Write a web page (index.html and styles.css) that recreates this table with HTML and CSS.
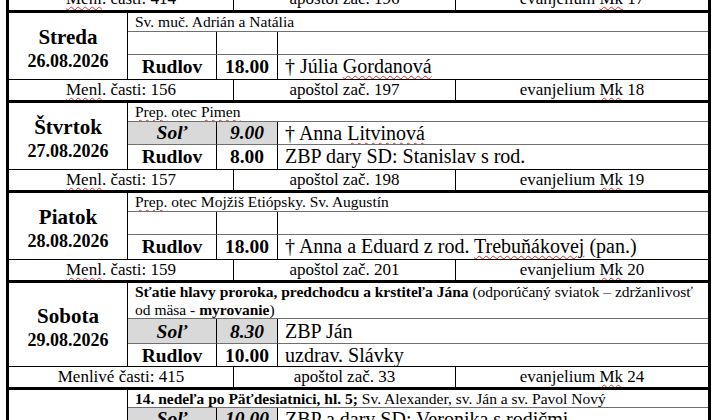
FILE: index.html
```html
<!DOCTYPE html>
<html lang="sk">
<head>
<meta charset="utf-8">
<title>Rozpis bohoslužieb</title>
<link rel="stylesheet" href="styles.css">
</head>
<body>
<div class="sheet">
  <div class="readings first">
    <div class="rd"><span class="sp">Menl</span>. časti: 414</div>
    <div class="rd">apoštol zač. 196</div>
    <div class="rd">evanjelium <span class="sp">Mk</span> 17</div>
  </div>

  <div class="day">
    <div class="dname"><div class="dn">Streda</div><div class="dd">26.08.2026</div></div>
    <div class="feast">Sv. muč. Adrián a Natália</div>
    <div class="loc r1"></div><div class="time r1"></div><div class="int r1"></div>
    <div class="loc">Rudlov</div><div class="time">18.00</div><div class="int">† Júlia <span class="sp">Gordanová</span></div>
  </div>
  <div class="readings">
    <div class="rd"><span class="sp">Menl</span>. časti: 156</div>
    <div class="rd">apoštol zač. 197</div>
    <div class="rd">evanjelium <span class="sp">Mk</span> 18</div>
  </div>

  <div class="day">
    <div class="dname"><div class="dn">Štvrtok</div><div class="dd">27.08.2026</div></div>
    <div class="feast"><span class="sp">Prep.</span> otec <span class="sp">Pimen</span></div>
    <div class="loc r1 grey it">Soľ</div><div class="time r1 grey it">9.00</div><div class="int r1">† Anna <span class="sp">Litvinová</span></div>
    <div class="loc">Rudlov</div><div class="time">8.00</div><div class="int">ZBP dary SD: Stanislav s rod.</div>
  </div>
  <div class="readings">
    <div class="rd"><span class="sp">Menl</span>. časti: 157</div>
    <div class="rd">apoštol zač. 198</div>
    <div class="rd">evanjelium <span class="sp">Mk</span> 19</div>
  </div>

  <div class="day">
    <div class="dname"><div class="dn">Piatok</div><div class="dd">28.08.2026</div></div>
    <div class="feast"><span class="sp">Prep.</span> otec Mojžiš Etiópsky. Sv. Augustín</div>
    <div class="loc r1"></div><div class="time r1"></div><div class="int r1"></div>
    <div class="loc">Rudlov</div><div class="time">18.00</div><div class="int">† Anna a Eduard z rod. <span class="sp">Trebuňákovej</span> (pan.)</div>
  </div>
  <div class="readings">
    <div class="rd"><span class="sp">Menl</span>. časti: 159</div>
    <div class="rd">apoštol zač. 201</div>
    <div class="rd">evanjelium <span class="sp">Mk</span> 20</div>
  </div>

  <div class="day tall">
    <div class="dname"><div class="dn">Sobota</div><div class="dd">29.08.2026</div></div>
    <div class="feast"><b>Sťatie hlavy proroka, predchodcu a krstiteľa Jána</b> (odporúčaný sviatok – zdržanlivosť<br>od mäsa - <b class="sp">myrovanie</b>)</div>
    <div class="loc r1 grey it">Soľ</div><div class="time r1 grey it">8.30</div><div class="int r1">ZBP Ján</div>
    <div class="loc">Rudlov</div><div class="time">10.00</div><div class="int">uzdrav. Slávky</div>
  </div>
  <div class="readings">
    <div class="rd">Menlivé časti: 415</div>
    <div class="rd">apoštol zač. 33</div>
    <div class="rd">evanjelium <span class="sp">Mk</span> 24</div>
  </div>

  <div class="day sunday">
    <div class="dname"><div class="dn">Nedeľa</div><div class="dd">30.08.2026</div></div>
    <div class="feast"><b>14. nedeľa po Päťdesiatnici, hl. 5;</b> Sv. Alexander, sv. Ján a sv. Pavol Nový</div>
    <div class="loc r1 grey it">Soľ</div><div class="time r1 grey it">10.00</div><div class="int r1">ZBP a dary SD: Veronika s rodičmi</div>
    <div class="loc r1">Rudlov</div><div class="time r1">8.30</div><div class="int r1">ZBP farníci</div>
    <div class="loc r1"></div><div class="time r1"></div><div class="int r1"></div>
    <div class="loc"></div><div class="time"></div><div class="int"></div>
  </div>
</div>
</body>
</html>
```

FILE: styles.css
```css
html, body {
  margin: 0;
  padding: 0;
  background: #fff;
  overflow: hidden;
  height: 420px;
}

body {
  font-family: "Liberation Serif", "Times New Roman", serif;
  color: #000;
}

.sheet {
  box-sizing: border-box;
  width: 705px;
  margin: -11px 0 0 6px;
  border-left: 3px solid #000;
  border-right: 3px solid #000;
}

.readings {
  box-sizing: border-box;
  display: grid;
  grid-template-columns: 224px 222px 1fr;
  height: 24px;
  border-top: 1px solid #000;
  border-bottom: 3px solid #000;
  font-size: 17px;
  line-height: 20px;
}

.readings.first {
  border-top: 0;
}

.rd {
  text-align: center;
  white-space: nowrap;
  overflow: hidden;
}

.rd + .rd {
  border-left: 1px solid #000;
}

.day {
  display: grid;
  grid-template-columns: 119px 89px 61px 1fr;
  grid-template-rows: 19px 23px 24px;
}

.day.tall {
  grid-template-rows: 36px 25px 22px;
}

.day.sunday {
  grid-template-rows: 18px 23px 24px 24px 24px;
}

.dname {
  grid-row: 1 / -1;
  border-right: 1px solid #000;
  display: flex;
  flex-direction: column;
  justify-content: center;
  align-items: center;
  font-weight: bold;
  padding-top: 5px;
}

.dn {
  font-size: 21px;
  line-height: 26px;
}

.dd {
  font-size: 18px;
  line-height: 23px;
}

.feast {
  grid-column: 2 / span 3;
  box-sizing: border-box;
  border-bottom: 1px solid #707070;
  font-size: 15.5px;
  line-height: 17px;
  padding: 0 0 0 7px;
  white-space: nowrap;
  overflow: hidden;
}

.day.tall .feast {
  line-height: 17.5px;
}

.loc, .time {
  box-sizing: border-box;
  border-right: 1px solid #000;
  text-align: center;
  font-weight: bold;
  font-size: 19.5px;
  line-height: 23px;
}

.int {
  box-sizing: border-box;
  font-size: 20px;
  line-height: 23px;
  padding-left: 7px;
  white-space: nowrap;
  overflow: hidden;
}

.r1 {
  border-bottom: 1px solid #707070;
  line-height: 22px;
}

.day.tall .r1 {
  line-height: 25px;
}

.grey {
  background: #d9d9d9;
}

.it {
  font-style: italic;
}

.sp {
  text-decoration-line: underline;
  text-decoration-style: wavy;
  text-decoration-color: #e02b2b;
  text-decoration-thickness: 1px;
  text-underline-offset: 2px;
}
```
